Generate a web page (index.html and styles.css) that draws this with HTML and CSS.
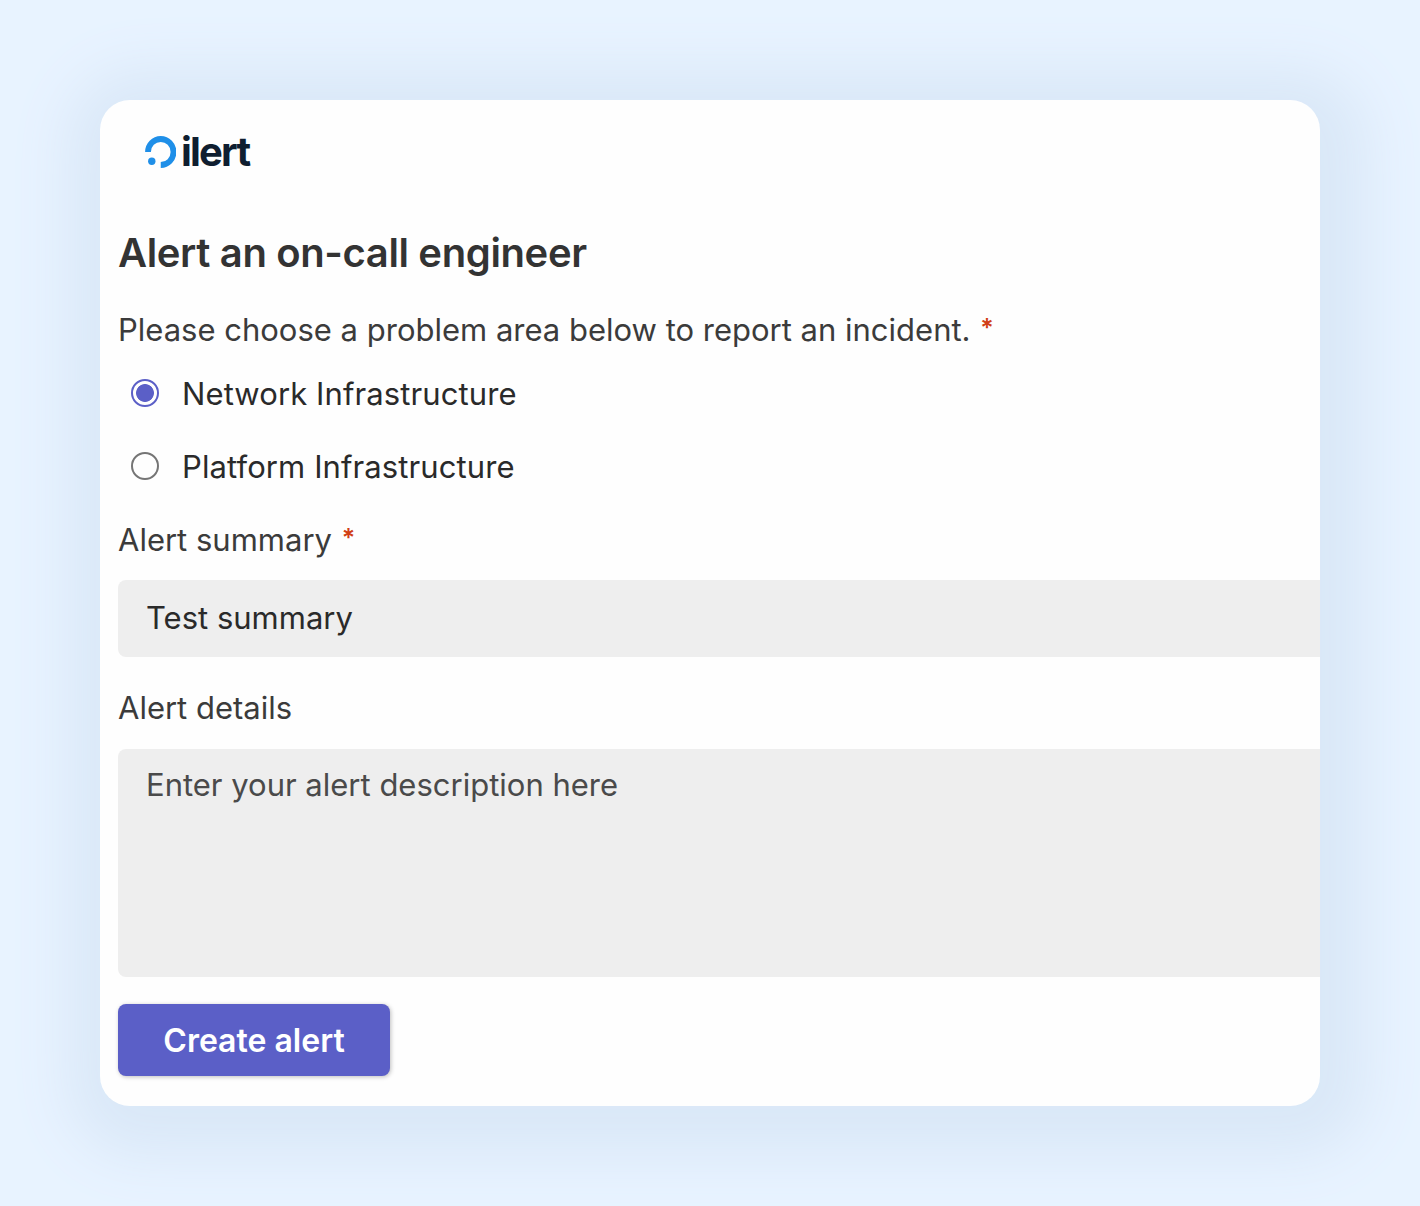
FILE: index.html
```html
<!DOCTYPE html>
<html lang="en">
<head>
  <meta charset="UTF-8" />
  <meta name="viewport" content="width=device-width, initial-scale=1.0"/>
  <title>Alert an on-call engineer</title>
  <link rel="stylesheet" href="styles.css">
</head>
<body>

  <main class="card">
    <div class="logo">
      <svg class="logo-mark" viewBox="0 0 31 32" width="31" height="32">
        <path d="M3 16 A12.75 13 0 1 1 15.75 29" fill="none" stroke="#1f8fe8" stroke-width="5.8"/>
        <circle cx="6.8" cy="25.2" r="3.7" fill="#1f8fe8"/>
      </svg>
      <span class="logo-text">ilert</span>
    </div>

    <form class="alert-form">
      <h1>Alert an on-call engineer</h1>

      <p class="label area-label">Please choose a problem area below to report an incident. <span class="required">*</span></p>
      <label class="option">
        <input type="radio" name="area" checked>
        <span>Network Infrastructure</span>
      </label>
      <label class="option">
        <input type="radio" name="area">
        <span>Platform Infrastructure</span>
      </label>

      <label class="label summary-label" for="summary">Alert summary <span class="required">*</span></label>
      <input class="field" id="summary" type="text" value="Test summary">

      <label class="label details-label" for="details">Alert details</label>
      <textarea class="field" id="details" placeholder="Enter your alert description here"></textarea>

      <button type="button">Create alert</button>
    </form>
  </main>

</body>
</html>
```
FILE: styles.css
```css
* {
  box-sizing: border-box;
}
body {
  margin: 0;
  height: 1206px;
  padding: 100px;
  overflow: hidden;
  background-color: #e8f3ff;
  font-family: Inter, "Liberation Sans", sans-serif;
  font-size: 31px;
  color: #2a2a2a;
}
.card {
  height: 1006px;
  padding: 36px 0 0 18px;
  background-color: #fefefe;
  border-radius: 30px;
  box-shadow: 8px 10px 56px 40px #dae8f8;
}
.logo {
  display: flex;
  gap: 5px;
  height: 32px;
  margin-left: 27px;
}
.logo-text {
  font-size: 40px;
  font-weight: 700;
  line-height: 32px;
  letter-spacing: -1.8px;
  color: #0f1e30;
}
.alert-form {
  display: flex;
  flex-direction: column;
  margin-top: 60px;
}
h1 {
  margin: 0;
  font-size: 40px;
  font-weight: 600;
  line-height: 50px;
  letter-spacing: -0.37px;
  color: #333;
}
.label {
  margin: 0;
  height: 40px;
  line-height: 39px;
  color: #3b3b3b;
}
.area-label {
  margin-top: 32px;
}
.required {
  margin-left: 1px;
  font-size: 25px;
  font-weight: 600;
  line-height: 1;
  vertical-align: 4px;
  color: #d13f16;
}
.option {
  display: flex;
  align-items: center;
  gap: 23px;
  height: 40px;
  margin: 23px 0 0 13px;
  letter-spacing: 0.1px;
}
.option + .option {
  margin-top: 33px;
}
.option input {
  appearance: none;
  width: 28px;
  height: 28px;
  margin: 0;
  border: 2px solid #757575;
  border-radius: 50%;
}
.option input:checked {
  border-color: #5b5fc7;
  background: radial-gradient(circle, #5b5fc7 8.5px, transparent 9.3px);
}
.summary-label {
  margin-top: 34px;
}
.field {
  font: inherit;
  border: 0;
  border-radius: 8px 0 0 8px;
  padding: 0 28px;
  background-color: #eee;
  color: #2a2a2a;
  outline: none;
  resize: none;
}
#summary {
  height: 77px;
  margin-top: 20px;
  padding-bottom: 2px;
}
.details-label {
  margin-top: 31px;
}
#details {
  height: 228px;
  margin-top: 21px;
  padding-top: 16px;
  line-height: 40px;
}
#details::placeholder {
  color: #4a4a4a;
}
button {
  align-self: flex-start;
  width: 272px;
  height: 72px;
  margin-top: 27px;
  border: 0;
  border-radius: 8px;
  background-color: #5b5fc7;
  box-shadow: 1px 1px 4px rgba(0,0,0,0.25);
  font: inherit;
  font-size: 32px;
  font-weight: 600;
  color: #fff;
}
```
